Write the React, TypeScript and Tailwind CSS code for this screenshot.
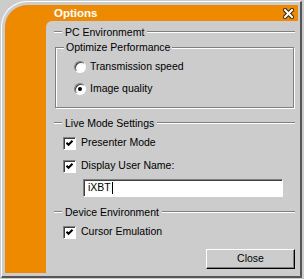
const etched = 'h-[2px] border-t border-b border-t-[#808080] border-b-white'

function Divider({ label }: { label: string }) {
  return (
    <div className="flex h-[14px] items-center gap-[3px]">
      <div className={`${etched} w-[8px]`} />
      <span className="leading-[14px]">{label}</span>
      <div className={`${etched} flex-1`} />
    </div>
  )
}

function Radio({ checked }: { checked?: boolean }) {
  return (
    <span className="flex h-[12px] w-[12px] shrink-0 items-center justify-center rounded-full border border-t-[#808080] border-l-[#808080] border-r-white border-b-white bg-white shadow-[inset_1px_1px_0_#404040]">
      {checked && <span className="h-[4px] w-[4px] rounded-full bg-black" />}
    </span>
  )
}

function CheckBox() {
  return (
    <span className="flex h-[13px] w-[13px] shrink-0 items-center justify-center border border-t-[#808080] border-l-[#808080] border-r-white border-b-white bg-white shadow-[inset_1px_1px_0_#404040]">
      <svg width="9" height="9" viewBox="0 0 9 9">
        <path d="M1.5 3.8 L3.5 5.8 L7.5 1.8" stroke="black" strokeWidth="2" fill="none" />
      </svg>
    </span>
  )
}

function CloseX() {
  return (
    <svg width="11" height="11" viewBox="0 0 11 11">
      <path d="M2 2 L9 9 M9 2 L2 9" stroke="#3b2a10" strokeWidth="4.2" strokeLinecap="square" fill="none" />
      <path d="M2 2 L9 9 M9 2 L2 9" stroke="white" strokeWidth="2" strokeLinecap="square" fill="none" />
    </svg>
  )
}

export default function App() {
  return (
    <div className="h-[279px] w-[304px] bg-[#cccccc] pl-[1px] pt-[1px] font-['Liberation_Sans',Arial,sans-serif] text-[10.5px] text-black">
      <div className="flex h-[277px] w-[301px] rounded-tl-[26px] border-t border-l border-r-2 border-b-2 border-t-white border-l-white border-r-[#555] border-b-[#555] pb-[3px] pl-[3px] pr-[2px] pt-[3px]">
        <div className="flex flex-1 flex-col rounded-tl-[22px] bg-[#ee8a00] pl-[41px]">
          <div className="flex h-[16px] items-center justify-between pl-[8px] pr-[4px]">
            <span className="text-[11.5px] font-bold leading-[16px] text-white">Options</span>
            <CloseX />
          </div>
          <div className="flex flex-1 flex-col rounded-tl-[6px] bg-[#cccccc] pl-[8px] pr-[3px] pt-[4px]">
            <Divider label="PC Environmemt" />

            <div className="relative mx-[1px] mt-[8px] border border-[#808080] pb-[11px] pl-[18px] pt-[12px] shadow-[1px_1px_0_#fff,inset_1px_1px_0_#fff]">
              <span className="absolute -top-[7px] left-[8px] bg-[#cccccc] px-[2px] leading-[13px]">
                Optimize Performance
              </span>
              <div className="flex flex-col gap-[8px]">
                <label className="flex h-[14px] items-center gap-[4px]">
                  <Radio />
                  <span>Transmission speed</span>
                </label>
                <label className="flex h-[14px] items-center gap-[4px]">
                  <Radio checked />
                  <span>Image quality</span>
                </label>
              </div>
            </div>

            <div className="mt-[8px]">
              <Divider label="Live Mode Settings" />
            </div>
            <label className="mt-[6px] flex h-[14px] items-center gap-[5px] pl-[9px]">
              <CheckBox />
              <span>Presenter Mode</span>
            </label>
            <label className="mt-[9px] flex h-[14px] items-center gap-[5px] pl-[9px]">
              <CheckBox />
              <span>Display User Name:</span>
            </label>
            <div className="ml-[29px] mt-[6px] flex h-[18px] w-[200px] items-center border border-t-[#808080] border-l-[#808080] border-r-white border-b-white bg-white pl-[4px] shadow-[inset_1px_1px_0_#404040]">
              <span>iXBT</span>
              <span className="ml-[1px] h-[12px] w-[1px] bg-black" />
            </div>

            <div className="mt-[8px]">
              <Divider label="Device Environment" />
            </div>
            <label className="mt-[6px] flex h-[14px] items-center gap-[5px] pl-[9px]">
              <CheckBox />
              <span>Cursor Emulation</span>
            </label>

            <div className="mt-[10px] flex justify-end">
              <button className="h-[20px] w-[89px] border border-t-white border-l-white border-r-black border-b-black bg-[#cccccc] text-[10.5px] shadow-[inset_-1px_-1px_0_#808080]">
                Close
              </button>
            </div>
          </div>
        </div>
      </div>
    </div>
  )
}
